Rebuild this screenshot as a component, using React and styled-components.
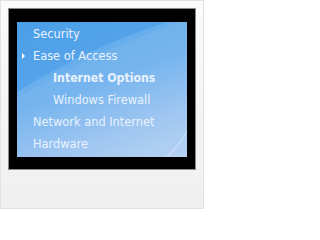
import React from 'react'
import styled, { createGlobalStyle } from 'styled-components'

const GlobalStyle = createGlobalStyle`
    html, body {
        margin: 0;
        padding: 0;
        background: #ffffff;
    }
`

const Frame = styled.div`
    width: 204px;
    height: 209px;
    box-sizing: border-box;
    border: 1px solid #e2e2e2;
    background: linear-gradient(to bottom, #fbfbfb 0%, #f3f3f3 60%, #f0f0f0 100%);
    padding: 7px 7px 0 7px;
`

const Screen = styled.div`
    width: 188px;
    height: 162px;
    box-sizing: border-box;
    background: #000;
    border: 1px solid #8a8a8a;
    padding: 13px 8px 12px 8px;
`

const Panel = styled.div`
    position: relative;
    overflow: hidden;
    width: 170px;
    height: 135px;
    background: linear-gradient(160deg, #4a9ee6 0%, #5aa6ec 45%, #8bbbef 75%, #a9cbf2 100%);
    display: flex;
    flex-direction: column;
    padding-top: 1px;
    box-sizing: border-box;
`

const Swoosh = styled.svg`
    position: absolute;
    left: 0;
    top: 0;
    width: 170px;
    height: 135px;
`

const Item = styled.div`
    position: relative;
    display: flex;
    align-items: center;
    height: 22px;
    padding-left: ${p => (p.$level === 1 ? 36 : 16)}px;
    font-family: ${p => (p.$bold ? '"DejaVu Sans Condensed", "DejaVu Sans"' : '"DejaVu Sans"')}, Verdana, sans-serif;
    font-size: ${p => (p.$bold ? 12.2 : 11.4)}px;
    font-weight: ${p => (p.$bold ? 700 : 400)};
    color: #e9f2fd;
    white-space: nowrap;
`

const Arrow = styled.span`
    position: absolute;
    left: 5px;
    top: 8px;
    width: 0;
    height: 0;
    border-top: 3px solid transparent;
    border-bottom: 3px solid transparent;
    border-left: 3px solid #ffffff;
`

const items = [
    { label: 'Security' },
    { label: 'Ease of Access', open: true },
    { label: 'Internet Options', level: 1, bold: true },
    { label: 'Windows Firewall', level: 1 },
    { label: 'Network and Internet' },
    { label: 'Hardware' },
]

export default function App() {
    return (
        <>
            <GlobalStyle />
            <Frame>
                <Screen>
                    <Panel>
                        <Swoosh viewBox="0 0 170 135">
                            <path d="M0 70 C40 45 90 20 150 0 L170 0 L170 135 L0 135 Z" fill="#ffffff" opacity="0.12" />
                            <path d="M0 76 C45 50 95 25 160 0 L170 0 L170 135 L0 135 Z" fill="#ffffff" opacity="0.06" />
                            <path d="M150 135 C160 125 168 115 170 108" stroke="#ffffff" strokeWidth="1.2" fill="none" opacity="0.35" />
                        </Swoosh>
                        {items.map(it => (
                            <Item key={it.label} $level={it.level} $bold={it.bold}>
                                {it.open && <Arrow />}
                                {it.label}
                            </Item>
                        ))}
                    </Panel>
                </Screen>
            </Frame>
        </>
    )
}
